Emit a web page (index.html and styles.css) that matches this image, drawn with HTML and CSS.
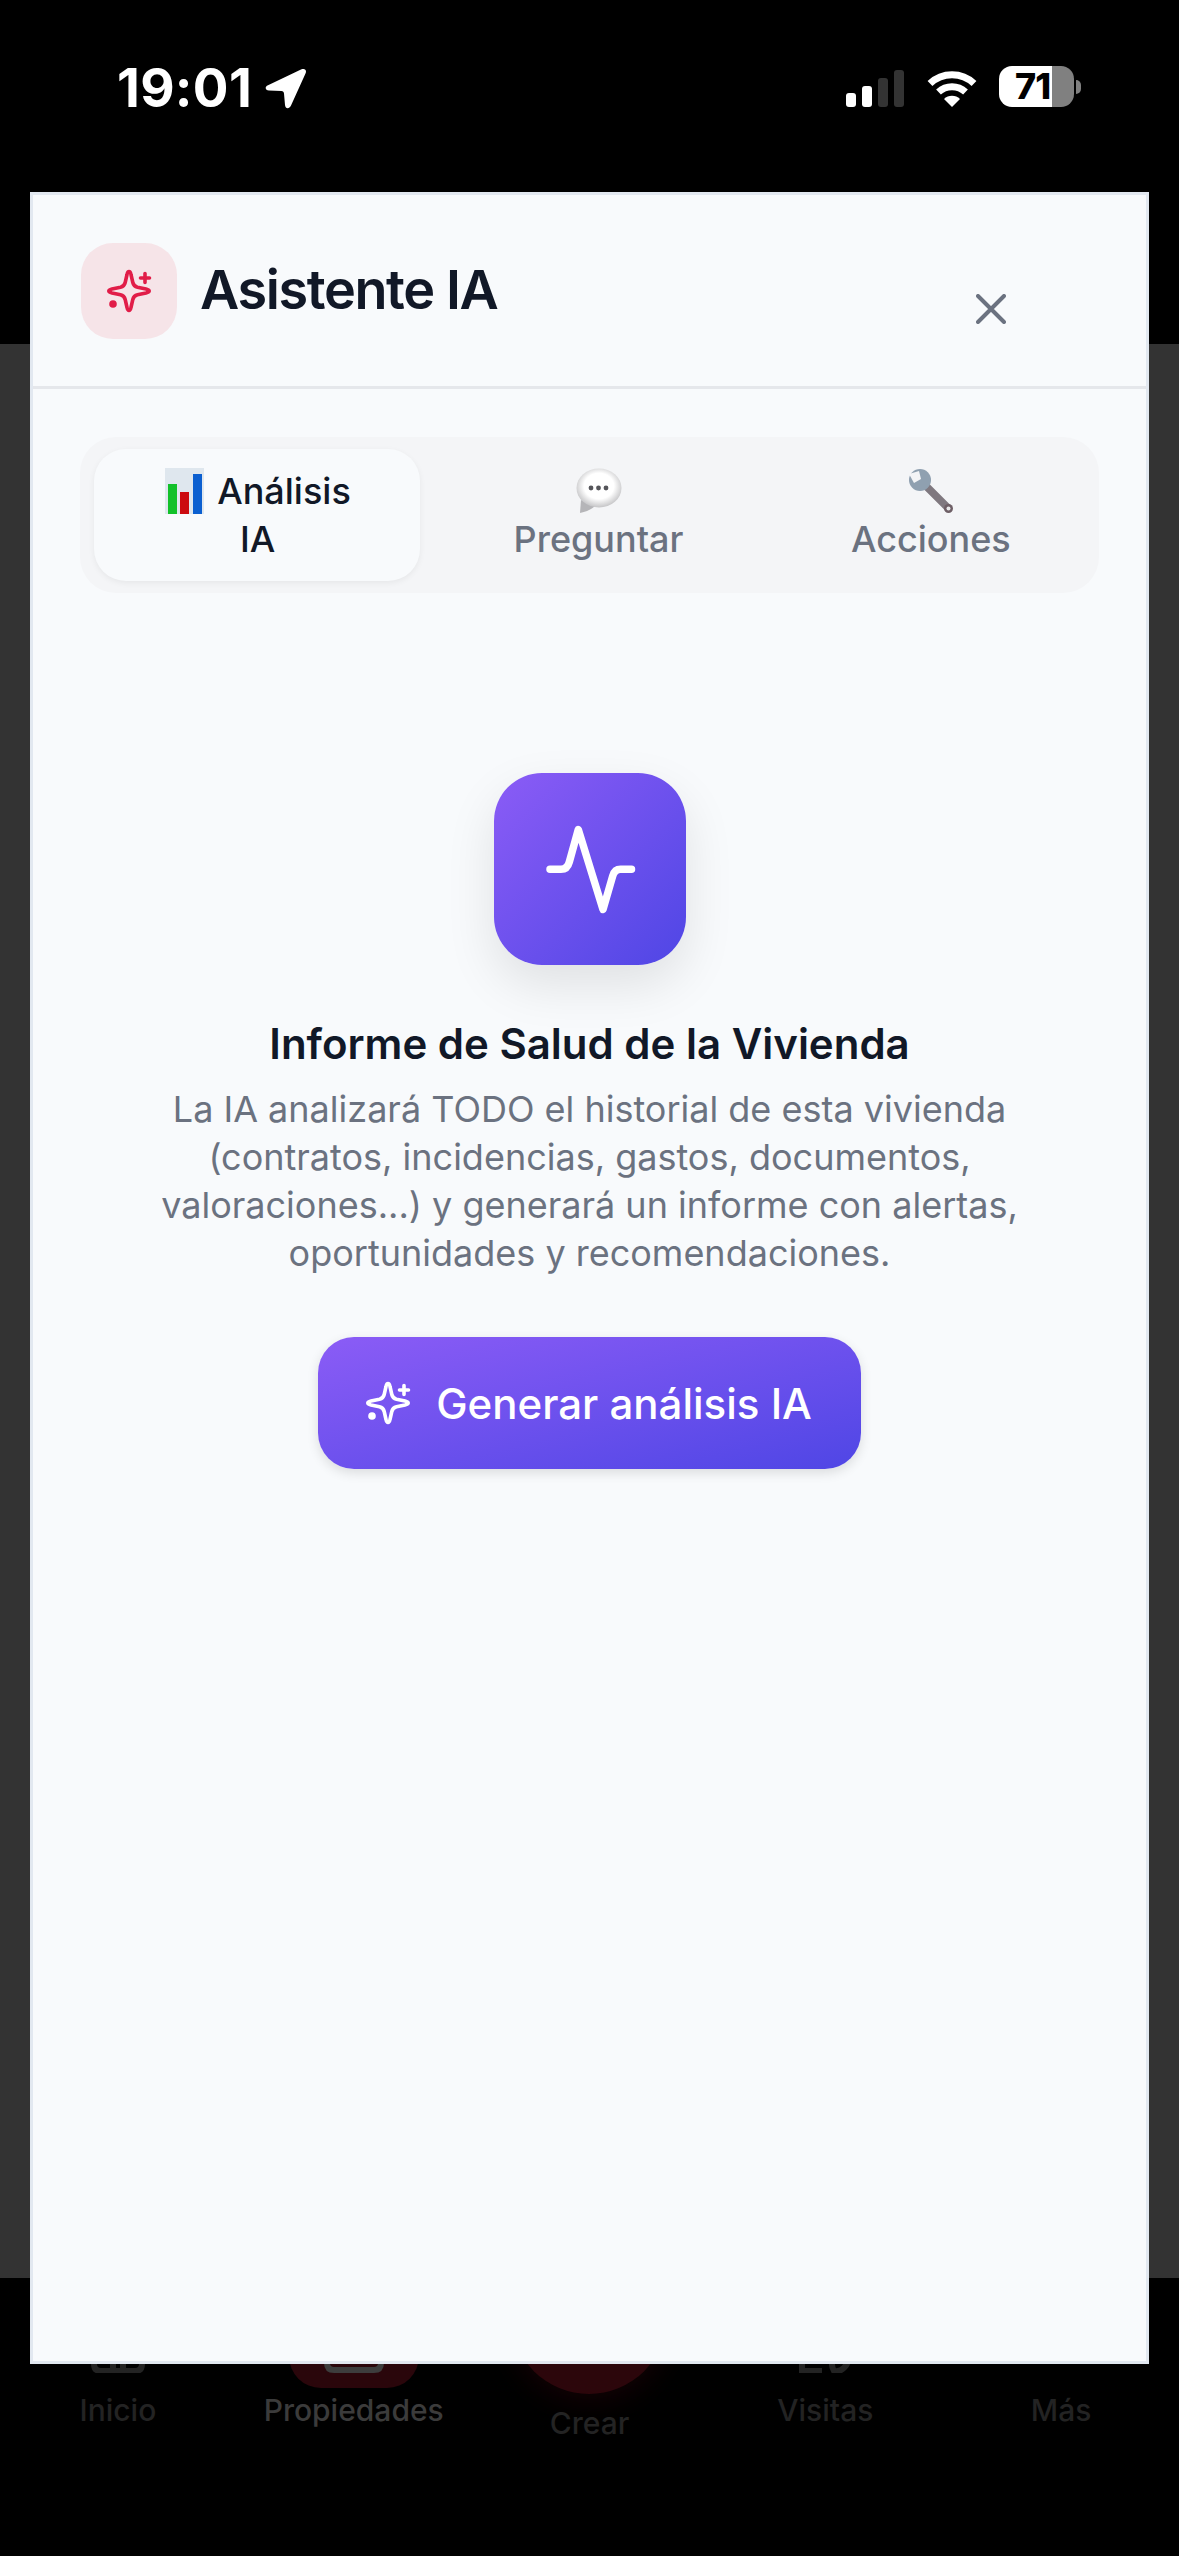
FILE: index.html
```html
<!DOCTYPE html>
<html lang="es">
<head>
<meta charset="utf-8">
<title>Asistente IA</title>
<link rel="stylesheet" href="styles.css">
</head>
<body>
<svg class="defs" width="0" height="0" aria-hidden="true">
  <defs>
    <symbol id="sparkle" viewBox="0 0 48 48">
      <path d="M24 4.5C25 4.5 25.6 5.5 26 7.5L27.8 15.5C28.4 18 30 19.6 32.5 20.2L41 22C43 22.5 44.2 23.2 44.2 24C44.2 24.8 43 25.5 41 26L32.5 27.8C30 28.4 28.4 30 27.8 32.5L26 40.5C25.6 42.5 25 43.5 24 43.5C23 43.5 22.4 42.5 22 40.5L20.2 32.5C19.6 30 18 28.4 15.5 27.8L7 26C5 25.5 3.8 24.8 3.8 24C3.8 23.2 5 22.5 7 22L15.5 20.2C18 19.6 19.6 18 20.2 15.5L22 7.5C22.4 5.5 23 4.5 24 4.5Z" fill="none" stroke="currentColor" stroke-width="3.6" stroke-linejoin="round"/>
      <path d="M40 6.5V15.5M35.5 11H44.5" fill="none" stroke="currentColor" stroke-width="3.6" stroke-linecap="round"/>
      <circle cx="8" cy="37" r="3.8" fill="currentColor"/>
    </symbol>
  </defs>
</svg>

<div class="screen">
  <header class="status">
    <div class="status-left">
      <span class="time">19:01</span>
      <svg class="arrow" width="42" height="41" viewBox="0 0 42 41"><path d="M36 1.5C40 0 42 2 40.5 5.5L26 37.5C24 41.5 20.5 41 20 37L19 25.5C18.9 24 18 23.2 16.5 23.1L4 22.5C0 22 -0.5 18.8 3 17.2Z" fill="#fff"/></svg>
    </div>
    <div class="status-right">
      <svg class="signal" width="58" height="37" viewBox="0 0 58 37">
        <rect x="0" y="23" width="10" height="14" rx="3" fill="#fff"/>
        <rect x="16" y="16" width="10" height="21" rx="3" fill="#fff"/>
        <rect x="32" y="8" width="10" height="29" rx="3" fill="#333"/>
        <rect x="48" y="0" width="10" height="37" rx="3" fill="#333"/>
      </svg>
      <svg class="wifi" width="50" height="37" viewBox="0 0 50 37">
        <path d="M3 13.5A32 32 0 0 1 47 13.5" fill="none" stroke="#fff" stroke-width="7"/>
        <path d="M11.5 22A20 20 0 0 1 38.5 22" fill="none" stroke="#fff" stroke-width="7"/>
        <path d="M25 37L17 29A11.5 11.5 0 0 1 33 29Z" fill="#fff"/>
      </svg>
      <div class="battery"><div class="battery-body"><span class="battery-num">71</span></div><span class="battery-tip"></span></div>
    </div>
  </header>

  <main class="backdrop"></main>

  <nav class="tabbar">
    <div class="nav-item">
      <div class="nav-slot">
        <svg class="nav-icon dim" width="66" height="66" viewBox="0 0 66 66"><path d="M9 40V57Q9 64 16 64H50Q57 64 57 57V40M28 64V48H38V64" fill="none" stroke="currentColor" stroke-width="6"/></svg>
      </div>
      <span class="nav-label">Inicio</span>
    </div>
    <div class="nav-item active">
      <div class="nav-slot pill">
        <svg class="nav-icon" width="66" height="66" viewBox="0 0 66 66"><path d="M6 40V56Q6 63 13 63H53Q60 63 60 56V40M18 50V56M48 50V56M18 52H48" fill="none" stroke="currentColor" stroke-width="6"/></svg>
      </div>
      <span class="nav-label">Propiedades</span>
    </div>
    <div class="nav-item create">
      <div class="create-circle"></div>
      <span class="nav-label">Crear</span>
    </div>
    <div class="nav-item">
      <div class="nav-slot">
        <svg class="nav-icon dim" width="66" height="66" viewBox="0 0 66 66"><path d="M10 50V64H30M42 50A12 13 0 0 0 42 64A12 13 0 0 0 56 50" fill="none" stroke="currentColor" stroke-width="6"/></svg>
      </div>
      <span class="nav-label">Visitas</span>
    </div>
    <div class="nav-item">
      <div class="nav-slot"></div>
      <span class="nav-label">Más</span>
    </div>
  </nav>

  <section class="modal">
    <div class="modal-head">
      <div class="head-badge"><svg class="sparkle-red" width="48" height="48"><use href="#sparkle"/></svg></div>
      <h1 class="head-title">Asistente IA</h1>
      <button class="close" aria-label="Cerrar">
        <svg width="30" height="30" viewBox="0 0 30 30"><path d="M2 2L28 28M28 2L2 28" stroke="currentColor" stroke-width="4" stroke-linecap="round"/></svg>
      </button>
    </div>

    <div class="modal-body">
      <div class="tabs">
        <div class="tab on">
          <svg class="emoji chart" width="39" height="46" viewBox="0 0 39 46">
            <rect width="39" height="46" fill="#dfe7ee"/>
            <rect x="3" y="16" width="9" height="30" fill="#12c12a"/>
            <rect x="15" y="24" width="9" height="22" fill="#cc0b10"/>
            <rect x="28" y="6" width="9" height="40" fill="#0b5fd0"/>
          </svg> Análisis<br>IA
        </div>
        <div class="tab">
          <svg class="emoji" width="46" height="46" viewBox="0 0 46 46">
            <defs><radialGradient id="bubble" cx="50%" cy="45%" r="55%"><stop offset="0.6" stop-color="#ffffff"/><stop offset="1" stop-color="#c4c4c6"/></radialGradient></defs>
            <path d="M5 32L4 45Q14 43 19 38Z" fill="#b5b5b8"/>
            <ellipse cx="23" cy="20" rx="22.5" ry="19.5" fill="url(#bubble)"/>
            <circle cx="15" cy="20" r="2.4" fill="#55555a"/><circle cx="22.5" cy="20" r="2.4" fill="#55555a"/><circle cx="30" cy="20" r="2.4" fill="#55555a"/>
          </svg><br>Preguntar
        </div>
        <div class="tab">
          <svg class="emoji" width="46" height="46" viewBox="0 0 46 46">
            <path d="M15 15L40 40" stroke="#7f787f" stroke-width="7.5" stroke-linecap="round"/>
            <circle cx="12" cy="12" r="11" fill="#8fa0b0"/>
            <path d="M1 6L11 3L13 11L6 15Z" fill="#f3f4f6"/>
            <circle cx="40.5" cy="40.5" r="4.5" fill="#6e5f66"/><circle cx="40.5" cy="40.5" r="2" fill="#e8e8ea"/>
          </svg><br>Acciones
        </div>
      </div>

      <div class="empty">
        <div class="hero">
          <svg width="96" height="96" viewBox="0 0 96 96"><path d="M8 48.3H19C23 48.3 26 46 27.3 41L36.3 8.5L61 88.5L70.7 55C72 50.5 75 48.3 78.5 48.3H89.5" fill="none" stroke="#fff" stroke-width="7.5" stroke-linecap="round" stroke-linejoin="round"/></svg>
        </div>
        <h2 class="empty-title">Informe de Salud de la Vivienda</h2>
        <p class="empty-text">La IA analizará TODO el historial de esta vivienda (contratos, incidencias, gastos, documentos, valoraciones...) y generará un informe con alertas, oportunidades y recomendaciones.</p>
        <button class="generate"><svg class="sparkle-white" width="48" height="48"><use href="#sparkle"/></svg><span>Generar análisis IA</span></button>
      </div>
    </div>
  </section>
</div>
</body>
</html>
```

FILE: styles.css
```css
* { box-sizing: border-box; }
html, body { margin: 0; padding: 0; background: #000; }
body { font-family: Inter, "Noto Sans", sans-serif; }
.defs { position: absolute; }

.screen {
  position: relative;
  width: 1179px;
  height: 2556px;
  display: flex;
  flex-direction: column;
  overflow: hidden;
  background: #000;
}

/* status bar */
.status {
  height: 344px;
  flex: none;
  display: flex;
  justify-content: space-between;
  align-items: flex-start;
  padding: 66px 98px 0 117px;
  background: #000;
}
.status-left { display: flex; align-items: center; gap: 13px; }
.time { color: #fff; font-size: 53px; line-height: 44px; font-weight: 700; letter-spacing: 0.3px; }
.status-right { display: flex; align-items: center; }
.signal { margin-top: 3px; }
.wifi { margin-left: 23px; margin-top: 3px; }
.battery { display: flex; align-items: center; margin-left: 22px; }
.battery-body {
  width: 75px;
  height: 41px;
  border-radius: 13px;
  background: linear-gradient(90deg, #fff 0, #fff 53px, #808080 53px);
  color: #000;
  font-size: 36px;
  font-weight: 800;
  line-height: 41px;
  padding-left: 16px;
}
.battery-num { letter-spacing: -1px; }
.battery-tip {
  width: 5px;
  height: 14px;
  margin-left: 2px;
  border-radius: 0 7px 7px 0;
  background: #808080;
}

.backdrop { flex: 1; background: #333; }

/* dimmed tab bar */
.tabbar {
  height: 278px;
  flex: none;
  display: grid;
  grid-template-columns: repeat(5, 1fr);
  align-items: start;
  padding-top: 14px;
  background: #000;
}
.nav-item { display: flex; flex-direction: column; align-items: center; color: #232323; }
.nav-item.active { color: #3b3b3b; }
.nav-slot { height: 96px; display: flex; align-items: center; justify-content: center; }
.nav-slot.pill { width: 130px; border-radius: 32px; background: #2a060b; }
.nav-icon { color: #232323; }
.active .nav-icon { color: #3d3d3d; }
.nav-label { margin-top: 6px; font-size: 30px; line-height: 32px; font-weight: 500; }
.create-circle {
  width: 156px;
  height: 156px;
  margin-top: -54px;
  border-radius: 50%;
  background: #2c060b;
  box-shadow: 0 6px 30px rgba(60, 5, 15, 0.35);
}
.create .nav-label { margin-top: 13px; }

/* modal */
.modal {
  position: absolute;
  left: 30px;
  top: 192px;
  width: 1119px;
  height: 2172px;
  display: flex;
  flex-direction: column;
  background: #f8fafc;
  border: 3px solid #e2e8f0;
}
.modal-head {
  display: flex;
  align-items: center;
  gap: 23px;
  padding: 48px 140px 47px 48px;
  border-bottom: 3px solid #e5e7eb;
}
.head-badge {
  width: 96px;
  height: 96px;
  flex: none;
  display: flex;
  align-items: center;
  justify-content: center;
  border-radius: 32px;
  background: #f6e4e8;
}
.sparkle-red { color: #e11d48; }
.sparkle-white { color: #fff; flex: none; }
.head-title { margin: -3px 0 0; font-size: 54px; line-height: 60px; font-weight: 600; color: #111827; letter-spacing: -1.4px; }
.close {
  margin: 36px 0 0 auto;
  padding: 0;
  border: 0;
  background: none;
  color: #6b7280;
  display: flex;
}

.modal-body { padding: 48px 47px 0 47px; }

.tabs {
  display: grid;
  grid-template-columns: 326fr 308fr 308fr;
  gap: 24px;
  padding: 12px 14px;
  border-radius: 36px;
  background: #f4f5f7;
}
.tab {
  height: 132px;
  padding-top: 18px;
  text-align: center;
  font-size: 36px;
  line-height: 48px;
  font-weight: 500;
  color: #6b7280;
  border-radius: 32px;
}
.tab.on { padding-left: 1px; background: #f8fafc; color: #111827; box-shadow: 0 2px 6px rgba(0, 0, 0, 0.06); }
.emoji { display: inline-block; vertical-align: top; margin-top: 1px; }
.emoji.chart { margin-right: 4px; }

.empty { display: flex; flex-direction: column; align-items: center; padding-top: 180px; }
.hero {
  width: 192px;
  height: 192px;
  display: flex;
  align-items: center;
  justify-content: center;
  border-radius: 48px;
  background: linear-gradient(to bottom right, #8b5cf6, #4f46e5);
  box-shadow: 0 20px 50px rgba(0, 0, 0, 0.1);
}
.empty-title { margin: 55px 0 17px; font-size: 42px; line-height: 48px; font-weight: 600; color: #111827; }
.empty-text { margin: 0; width: 880px; text-align: center; font-size: 36px; line-height: 48px; color: #6b7280; }
.generate {
  margin-top: 60px;
  width: 543px;
  height: 132px;
  display: flex;
  align-items: center;
  justify-content: center;
  gap: 24px;
  padding: 0 3px 0 0;
  border: 0;
  border-radius: 36px;
  background: linear-gradient(to bottom right, #8b5cf6, #4f46e5);
  box-shadow: 0 4px 12px rgba(0, 0, 0, 0.12);
  color: #fff;
  font-family: inherit;
  font-size: 42px;
  font-weight: 500;
}
```
